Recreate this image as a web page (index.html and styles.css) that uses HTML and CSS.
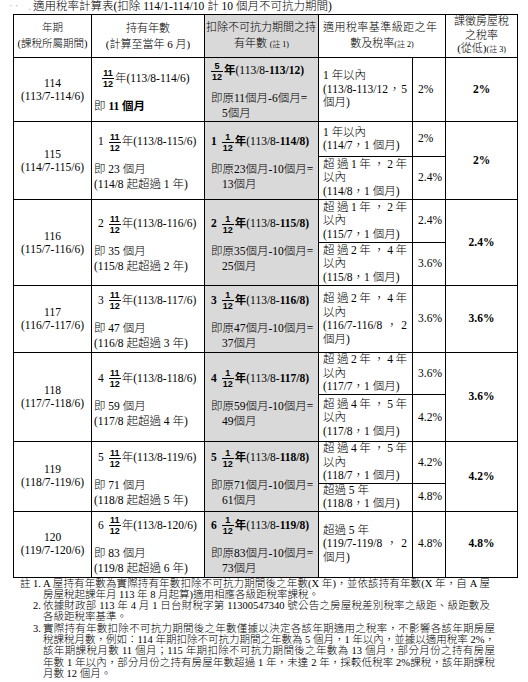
FILE: index.html
```html
<!DOCTYPE html>
<html lang="zh-Hant">
<head>
<meta charset="utf-8">
<title>適用稅率計算表</title>
<link rel="stylesheet" href="styles.css">
</head>
<body>
<div class="page">
  <div class="title"><span class="dots">‥ .</span>適用稅率計算表(扣除 114/1-114/10 計 10 個月不可抗力期間)</div>
  <table class="tbl">
    <colgroup>
      <col class="w1"><col class="w2"><col class="w3"><col class="w4"><col class="w5"><col class="w6">
    </colgroup>
    <tr class="r-head">
      <th class="hd h1">年期<br>(課稅所屬期間)</th>
      <th class="hd">持有年數<br>(計算至當年 6 月)</th>
      <th class="hd g"><div class="jf hj3"><span>扣</span><span>除</span><span>不</span><span>可</span><span>抗</span><span>力</span><span>期</span><span>間</span><span>之</span><span>持</span></div>有年數 <small>(註 1)</small></th>
      <th class="hd" colspan="2"><div class="jf hj4"><span>適</span><span>用</span><span>稅</span><span>率</span><span>基</span><span>準</span><span>級</span><span>距</span><span>之</span><span>年</span></div>數及稅率<small>(註 2)</small></th>
      <th class="hd h5">課徵房屋稅<br>之稅率<br>(從低)<small>(註 3)</small></th>
    </tr>

    <!-- 114 -->
    <tr class="r114">
      <td class="yr">114<br>(113/7-114/6)</td>
      <td class="hold"><div class="fl p0"><span class="fr"><span>11</span><span class="dn">12</span></span>年(113/8-114/6)</div><div class="tl">即 <b>11 個月</b></div></td>
      <td class="net g"><div class="fl"><span class="fr"><span>5</span><span class="dn">12</span></span><b>年</b>(113/8-<b>113/12)</b></div><div class="tl">即原11個月-6個月=</div><div class="tl ind">5個月</div></td>
      <td class="rng"><div>1 年以內</div><div class="jf"><span>(113/8-113/12</span><span>，</span><span>5</span></div><div>個月)</div></td>
      <td class="rate">2%</td>
      <td class="fin">2%</td>
    </tr>

    <!-- 115 -->
    <tr class="r115a">
      <td class="yr" rowspan="2">115<br>(114/7-115/6)</td>
      <td class="hold" rowspan="2"><div class="fl"><span class="wh">1</span><span class="fr"><span>11</span><span class="dn">12</span></span>年(113/8-115/6)</div><div class="tl">即 23 個月</div><div class="tl">(114/8 起超過 1 年)</div></td>
      <td class="net g" rowspan="2"><div class="fl"><b class="wh">1</b><span class="fr"><span>1</span><span class="dn">12</span></span><b>年</b>(113/8-<b>114/8)</b></div><div class="tl">即原23個月-10個月=</div><div class="tl ind">13個月</div></td>
      <td class="rng"><div>1 年以內</div><div>(114/7，1 個月)</div></td>
      <td class="rate">2%</td>
      <td class="fin" rowspan="2">2%</td>
    </tr>
    <tr class="r115b">
      <td class="rng"><div class="jf"><span>超</span><span>過</span><span>1</span><span>年</span><span>，</span><span>2</span><span>年</span></div><div>以內</div><div>(114/8，1 個月)</div></td>
      <td class="rate">2.4%</td>
    </tr>

    <!-- 116 -->
    <tr class="r116a">
      <td class="yr" rowspan="2">116<br>(115/7-116/6)</td>
      <td class="hold" rowspan="2"><div class="fl"><span class="wh">2</span><span class="fr"><span>11</span><span class="dn">12</span></span>年(113/8-116/6)</div><div class="tl">即 35 個月</div><div class="tl">(115/8 起超過 2 年)</div></td>
      <td class="net g" rowspan="2"><div class="fl"><b class="wh">2</b><span class="fr"><span>1</span><span class="dn">12</span></span><b>年</b>(113/8-<b>115/8)</b></div><div class="tl">即原35個月-10個月=</div><div class="tl ind">25個月</div></td>
      <td class="rng"><div class="jf"><span>超</span><span>過</span><span>1</span><span>年</span><span>，</span><span>2</span><span>年</span></div><div>以內</div><div>(115/7，1 個月)</div></td>
      <td class="rate">2.4%</td>
      <td class="fin" rowspan="2">2.4%</td>
    </tr>
    <tr class="r116b">
      <td class="rng"><div class="jf"><span>超</span><span>過</span><span>2</span><span>年</span><span>，</span><span>4</span><span>年</span></div><div>以內</div><div>(115/8，1 個月)</div></td>
      <td class="rate">3.6%</td>
    </tr>

    <!-- 117 -->
    <tr class="r117">
      <td class="yr">117<br>(116/7-117/6)</td>
      <td class="hold"><div class="fl"><span class="wh">3</span><span class="fr"><span>11</span><span class="dn">12</span></span>年(113/8-117/6)</div><div class="tl">即 47 個月</div><div class="tl">(116/8 起超過 3 年)</div></td>
      <td class="net g"><div class="fl"><b class="wh">3</b><span class="fr"><span>1</span><span class="dn">12</span></span><b>年</b>(113/8-<b>116/8)</b></div><div class="tl">即原47個月-10個月=</div><div class="tl ind">37個月</div></td>
      <td class="rng"><div class="jf"><span>超</span><span>過</span><span>2</span><span>年</span><span>，</span><span>4</span><span>年</span></div><div>以內</div><div class="jf"><span>(116/7-116/8</span><span>，</span><span>2</span></div><div>個月)</div></td>
      <td class="rate">3.6%</td>
      <td class="fin">3.6%</td>
    </tr>

    <!-- 118 -->
    <tr class="r118a">
      <td class="yr" rowspan="2">118<br>(117/7-118/6)</td>
      <td class="hold" rowspan="2"><div class="fl"><span class="wh">4</span><span class="fr"><span>11</span><span class="dn">12</span></span>年(113/8-118/6)</div><div class="tl">即 59 個月</div><div class="tl">(117/8 起超過 4 年)</div></td>
      <td class="net g" rowspan="2"><div class="fl"><b class="wh">4</b><span class="fr"><span>1</span><span class="dn">12</span></span><b>年</b>(113/8-<b>117/8)</b></div><div class="tl">即原59個月-10個月=</div><div class="tl ind">49個月</div></td>
      <td class="rng"><div class="jf"><span>超</span><span>過</span><span>2</span><span>年</span><span>，</span><span>4</span><span>年</span></div><div>以內</div><div>(117/7，1 個月)</div></td>
      <td class="rate">3.6%</td>
      <td class="fin" rowspan="2">3.6%</td>
    </tr>
    <tr class="r118b">
      <td class="rng"><div class="jf"><span>超</span><span>過</span><span>4</span><span>年</span><span>，</span><span>5</span><span>年</span></div><div>以內</div><div>(117/8，1 個月)</div></td>
      <td class="rate">4.2%</td>
    </tr>

    <!-- 119 -->
    <tr class="r119a">
      <td class="yr" rowspan="2">119<br>(118/7-119/6)</td>
      <td class="hold" rowspan="2"><div class="fl"><span class="wh">5</span><span class="fr"><span>11</span><span class="dn">12</span></span>年(113/8-119/6)</div><div class="tl">即 71 個月</div><div class="tl">(118/8 起超過 5 年)</div></td>
      <td class="net g" rowspan="2"><div class="fl"><b class="wh">5</b><span class="fr"><span>1</span><span class="dn">12</span></span><b>年</b>(113/8-<b>118/8)</b></div><div class="tl">即原71個月-10個月=</div><div class="tl ind">61個月</div></td>
      <td class="rng"><div class="jf"><span>超</span><span>過</span><span>4</span><span>年</span><span>，</span><span>5</span><span>年</span></div><div>以內</div><div>(118/7，1 個月)</div></td>
      <td class="rate">4.2%</td>
      <td class="fin" rowspan="2">4.2%</td>
    </tr>
    <tr class="r119b">
      <td class="rng"><div>超過 5 年</div><div>(118/8，1 個月)</div></td>
      <td class="rate">4.8%</td>
    </tr>

    <!-- 120 -->
    <tr class="r120">
      <td class="yr">120<br>(119/7-120/6)</td>
      <td class="hold"><div class="fl"><span class="wh">6</span><span class="fr"><span>11</span><span class="dn">12</span></span>年(113/8-120/6)</div><div class="tl">即 83 個月</div><div class="tl">(119/8 起超過 6 年)</div></td>
      <td class="net g"><div class="fl"><b class="wh">6</b><span class="fr"><span>1</span><span class="dn">12</span></span><b>年</b>(113/8-<b>119/8)</b></div><div class="tl">即原83個月-10個月=</div><div class="tl ind">73個月</div></td>
      <td class="rng"><div>超過 5 年</div><div class="jf"><span>(119/7-119/8</span><span>，</span><span>2</span></div><div>個月)</div></td>
      <td class="rate">4.8%</td>
      <td class="fin">4.8%</td>
    </tr>
  </table>

  <div class="notes">
    <div class="note">
      <span class="lbl">註</span><span class="num">1.</span>
      <div class="txt">
        <div class="nl">A 屋持有年數為實際持有年數扣除不可抗力期間後之年數(X 年)，並依該持有年數(X 年，自 A 屋</div>
        <div class="nl last">房屋稅起課年月 113 年 8 月起算)適用相應各級距稅率課稅。</div>
      </div>
    </div>
    <div class="note">
      <span class="lbl"></span><span class="num">2.</span>
      <div class="txt">
        <div class="nl">依據財政部 113 年 4 月 1 日台財稅字第 11300547340 號公告之房屋稅差別稅率之級距、級距數及</div>
        <div class="nl last">各級距稅率基準。</div>
      </div>
    </div>
    <div class="note">
      <span class="lbl"></span><span class="num">3.</span>
      <div class="txt">
        <div class="nl">實際持有年數扣除不可抗力期間後之年數僅據以決定各該年期適用之稅率，不影響各該年期房屋</div>
        <div class="nl">稅課稅月數，例如：114 年期扣除不可抗力期間之年數為 5 個月，1 年以內，並據以適用稅率 2%，</div>
        <div class="nl">該年期課稅月數 11 個月；115 年期扣除不可抗力期間後之年數為 13 個月，部分月份之持有房屋</div>
        <div class="nl">年數 1 年以內，部分月份之持有房屋年數超過 1 年，未達 2 年，採較低稅率 2%課稅，該年期課稅</div>
        <div class="nl last">月數 12 個月。</div>
      </div>
    </div>
  </div>
</div>
</body>
</html>
```

FILE: styles.css
```css
* { box-sizing: border-box; }

body {
  margin: 0;
  background: #fff;
  color: #000;
  font-family: "Liberation Serif", "Noto Sans CJK TC", serif;
  font-weight: 300;
}

b { font-weight: 700; }

.page {
  width: 528px;
  padding-left: 13px;
}

.title {
  margin-left: -5px;
  height: 14px;
  font-size: 11.5px;
  line-height: 13px;
  white-space: nowrap;
}

.dots {
  display: inline-block;
  width: 25px;
  color: #bbb;
  letter-spacing: 3px;
}

.tbl {
  border-collapse: collapse;
  table-layout: fixed;
  width: 504px;
}

.w1 { width: 78px; }
.w2 { width: 113px; }
.w3 { width: 114px; }
.w4 { width: 94px; }
.w5 { width: 33px; }
.w6 { width: 72px; }

.tbl td,
.tbl th {
  border: 1px solid #000;
  padding: 0;
  vertical-align: middle;
  font-size: 11.5px;
  font-weight: 300;
  line-height: 13.5px;
}

.g { background: #d9d9d9; }

.tbl th.hd {
  font-size: 11px;
  line-height: 16px;
  text-align: center;
  padding: 0;
  white-space: nowrap;
}

.tbl th.h1 { font-size: 10.5px; }

.tbl th.h5 { line-height: 13.5px; }

.tbl th small { font-size: 8px; }

.hj3 { margin: 0 4px 0 1px; }
.hj4 { margin: 0 8px 0 4px; }

.jf {
  display: flex;
  justify-content: space-between;
  white-space: nowrap;
}

/* row heights */
.r-head { height: 43px; }
.r114 { height: 62px; }
.r115a { height: 35px; }
.r115b { height: 43px; }
.r116a { height: 43px; }
.r116b { height: 43px; }
.r117 { height: 67px; }
.r118a { height: 42px; }
.r118b { height: 47px; }
.r119a { height: 39px; }
.r119b { height: 28px; }
.r120 { height: 66px; }

.tbl td.yr {
  text-align: center;
  line-height: 13px;
}

.tbl td.hold { padding: 0 0 0 2px; }
.tbl td.net { padding: 0 0 0 6px; }

.fl {
  white-space: nowrap;
  height: 24px;
  line-height: 24px;
  margin-bottom: 9px;
}

.hold .fl { padding-left: 4px; }
.hold .fl.p0 { padding-left: 8px; }

.tl {
  white-space: nowrap;
  line-height: 15px;
}

.tl.ind { padding-left: 11px; }

.wh { margin-right: 5px; }

.fr {
  display: inline-flex;
  flex-direction: column;
  vertical-align: middle;
  font-family: "Liberation Sans", sans-serif;
  font-weight: 700;
  font-size: 9px;
  line-height: 10px;
  text-align: center;
  margin: 0 1px 0 0;
}

.fr .dn { border-top: 1px solid #000; padding: 0 1px; }

.tbl td.rng {
  padding: 0 5px 0 4px;
  white-space: nowrap;
}

.tbl td.rate { padding-left: 5px; }

.tbl td.fin {
  text-align: center;
  font-weight: 700;
}

.notes {
  margin-left: 7px;
  width: 470px;
  font-size: 10.5px;
  line-height: 11.3px;
}

.note {
  display: grid;
  grid-template-columns: 13px 10px 1fr;
}

.nl {
  white-space: nowrap;
  text-align: justify;
  text-align-last: justify;
}

.nl.last { text-align-last: left; }
```
